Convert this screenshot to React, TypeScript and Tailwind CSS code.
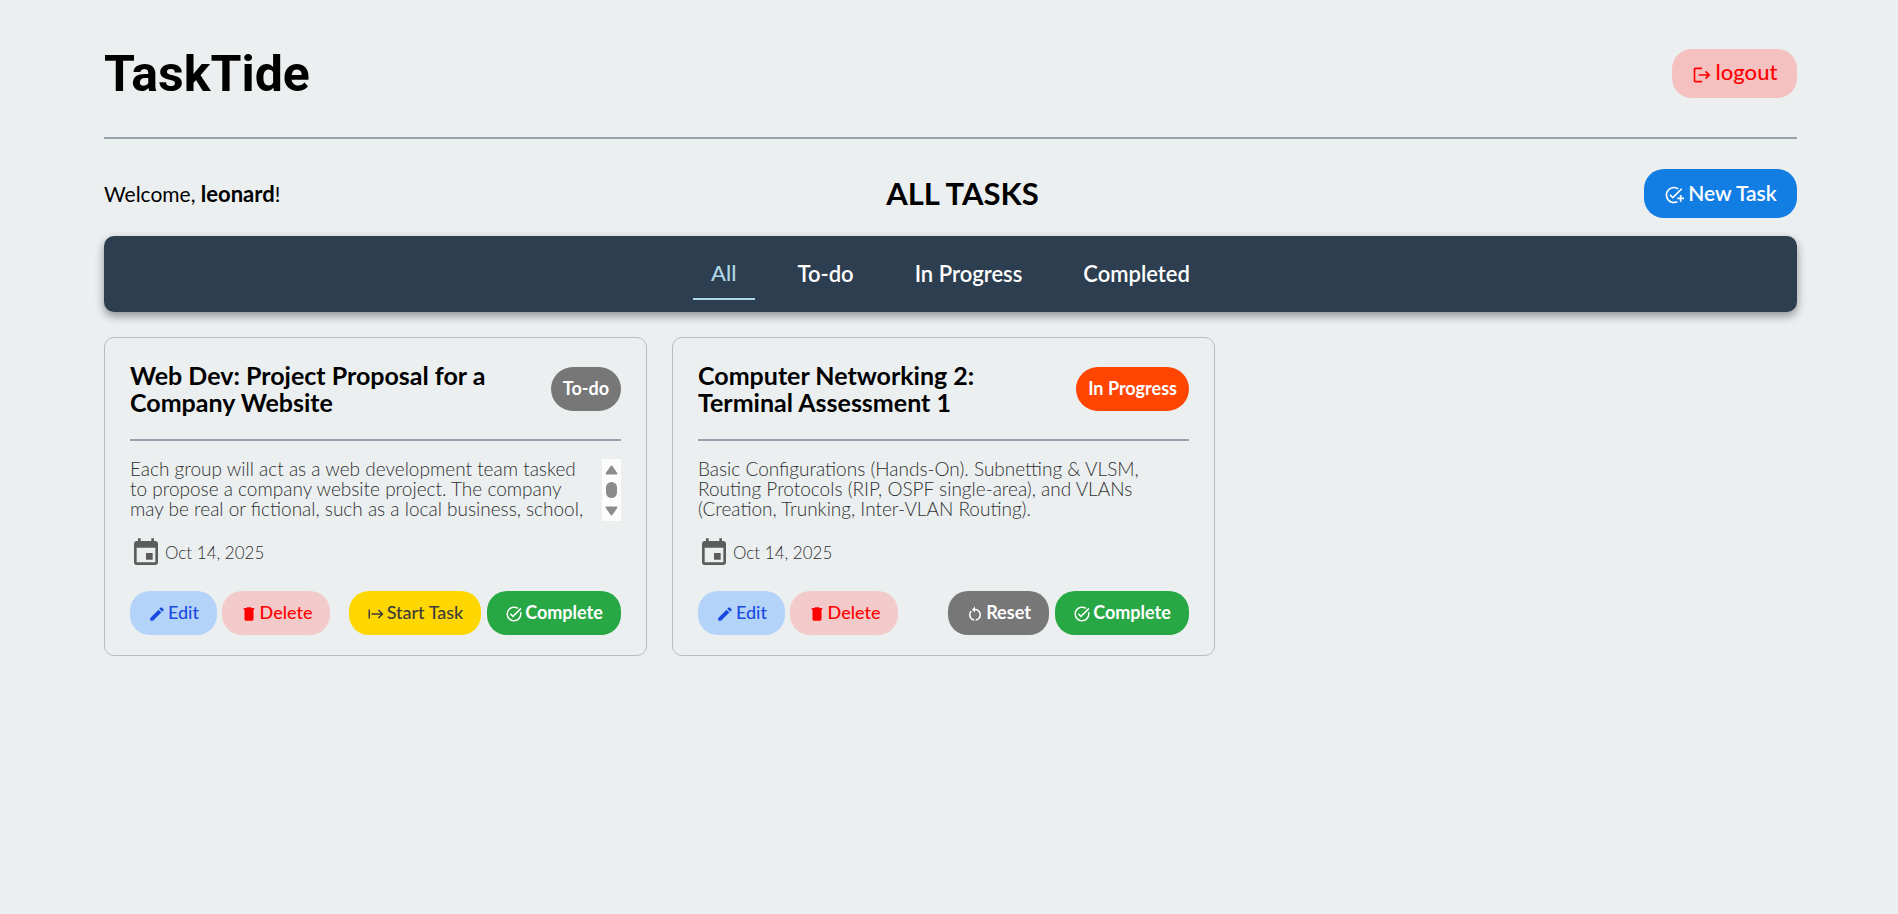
import { useState, type ReactNode } from "react";
import { MdAddTask, MdEdit, MdEvent, MdLogout, MdRestartAlt, MdStart, MdTaskAlt } from "react-icons/md";

type Status = "To-do" | "In Progress" | "Completed";

interface Task {
  title: string;
  status: Status;
  description: string;
  due: string;
  overflowing?: boolean;
}

const tasks: Task[] = [
  {
    title: "Web Dev: Project Proposal for a Company Website",
    status: "To-do",
    description:
      "Each group will act as a web development team tasked to propose a company website project. The company may be real or fictional, such as a local business, school,",
    due: "Oct 14, 2025",
    overflowing: true,
  },
  {
    title: "Computer Networking 2: Terminal Assessment 1",
    status: "In Progress",
    description:
      "Basic Configurations (Hands-On). Subnetting & VLSM, Routing Protocols (RIP, OSPF single-area), and VLANs (Creation, Trunking, Inter-VLAN Routing).",
    due: "Oct 14, 2025",
  },
];

const filters = ["All", "To-do", "In Progress", "Completed"];

const badgeColors: Record<Status, string> = {
  "To-do": "bg-[#777777]",
  "In Progress": "bg-[#ff4500]",
  Completed: "bg-[#28a745]",
};

function TrashIcon() {
  return (
    <svg viewBox="0 0 24 24" className="size-[18px]" fill="currentColor" aria-hidden="true">
      <path d="M8 21c-1.100 0-2-.9-2-2V6H5V4h3.500l1-1h5l1 1H19v2h-1v13c0 1.100-.9 2-2 2z" />
    </svg>
  );
}

function CardButton({ className, icon, children }: { className: string; icon: ReactNode; children: ReactNode }) {
  return (
    <button
      type="button"
      className={`flex h-11 items-center justify-center gap-0.5 whitespace-nowrap rounded-[20px] pb-0.5 text-[18px] ${className}`}
    >
      <span className="pt-1">{icon}</span>
      {children}
    </button>
  );
}

function ScrollTrack() {
  return (
    <svg viewBox="0 0 19 62" className="h-[62px] w-[19px] shrink-0" aria-hidden="true">
      <rect width="19" height="62" fill="#fcfcfc" />
      <path d="M8.500 7.200q1-1.400 2 0L15.200 14q.8 1.500-.8 1.500H4.600Q3 15.500 3.800 14z" fill="#8b8b8b" />
      <rect x="4" y="23" width="11" height="16" rx="5.500" fill="#8b8b8b" />
      <path d="M8.500 55.800q1 1.400 2 0L15.200 49q.8-1.500-.8-1.500H4.600Q3 47.500 3.800 49z" fill="#8b8b8b" />
    </svg>
  );
}

function TaskCard({ task }: { task: Task }) {
  return (
    <article className="rounded-[10px] border border-[#b9bdc0] px-[25px] pb-5 pt-6">
      <header className="flex items-center justify-between gap-4 border-b-2 border-[#98a2ac] pb-[23px]">
        <h3 className="max-w-[360px] text-[25px] font-bold leading-[27px]">{task.title}</h3>
        <span
          className={`flex h-11 shrink-0 items-center rounded-[22px] px-3 pb-0.5 text-[18px] font-bold text-white ${badgeColors[task.status]}`}
        >
          {task.status}
        </span>
      </header>
      <div className="mt-[18px] flex h-[62px] justify-between">
        <p className="max-w-[460px] text-[19px] font-light leading-5 text-[#303030]">{task.description}</p>
        {task.overflowing && <ScrollTrack />}
      </div>
      <div className="mt-4 flex items-center gap-[3px] text-[#303030]">
        <MdEvent className="size-8 text-[#5c5c5c]" aria-hidden="true" />
        <time className="text-[17px] font-light" dateTime="2025-10-14">
          {task.due}
        </time>
      </div>
      <div className="mt-[22px] flex items-center justify-between">
        <div className="flex gap-[5px]">
          <CardButton className="w-[87px] bg-[#b3d3f9] font-medium text-[#1a4be0]" icon={<MdEdit className="size-[18px]" />}>
            Edit
          </CardButton>
          <CardButton className="w-[108px] bg-[#f3caca] font-medium text-[#ff0000]" icon={<TrashIcon />}>
            Delete
          </CardButton>
        </div>
        <div className="flex gap-1.5">
          {task.status === "To-do" ? (
            <CardButton className="w-[132px] bg-[#ffd700] font-medium text-[#3c3c3c]" icon={<MdStart className="size-[18px]" />}>
              Start Task
            </CardButton>
          ) : (
            <CardButton className="w-[101px] bg-[#777777] font-bold text-white" icon={<MdRestartAlt className="size-[18px]" />}>
              Reset
            </CardButton>
          )}
          <CardButton className="w-[134px] bg-[#28a745] font-bold text-white" icon={<MdTaskAlt className="size-[18px]" />}>
            Complete
          </CardButton>
        </div>
      </div>
    </article>
  );
}

export default function App() {
  const [active, setActive] = useState("All");
  const shown = tasks.filter((task) => active === "All" || task.status === active);

  return (
    <div className="min-h-screen bg-[#ebeff0] pb-10 pl-[104px] pr-[101px] pt-[49px] font-['Lato',sans-serif] text-black">
      <header className="flex h-[90px] items-start justify-between border-b-2 border-[#98a2ac]">
        <h1 className="font-['Roboto',sans-serif] text-[50px] font-bold leading-[51px]">TaskTide</h1>
        <button
          type="button"
          className="flex h-[49px] w-[125px] items-center justify-center gap-1 rounded-[20px] bg-[#f5c0c0] pb-1 text-[22px] font-medium text-[#ff0000]"
        >
          <MdLogout className="mt-1.5 size-5" aria-hidden="true" />
          logout
        </button>
      </header>

      <main>
        <div className="mt-[30px] grid grid-cols-[1fr_auto_1fr] items-center">
          <p className="text-[21px]">
            Welcome, <strong className="text-[22px] font-bold">leonard</strong>!
          </p>
          <h2 className="ml-6 text-[31px] font-bold leading-[49px]">ALL TASKS</h2>
          <button
            type="button"
            className="flex h-[49px] w-[153px] items-center justify-center gap-1 justify-self-end rounded-[20px] bg-[#127ee3] pb-0.5 text-[21px] font-semibold text-white"
          >
            <MdAddTask className="mt-1 size-5" aria-hidden="true" />
            New Task
          </button>
        </div>

        <nav className="mt-[18px] flex h-[76px] items-center justify-center gap-[25px] rounded-[10px] bg-[#2d3e50] text-[22px] shadow-[0_4px_10px_rgba(0,0,0,0.4)]">
          {filters.map((name) => (
            <button
              key={name}
              type="button"
              onClick={() => setActive(name)}
              className={
                name === active
                  ? "h-[52px] border-b-2 border-[#add8e6] px-[18px] pb-0.5 font-medium text-[#add8e6]"
                  : "h-[52px] px-[18px] pb-0.5 font-semibold text-white"
              }
            >
              {name}
            </button>
          ))}
        </nav>

        <section className="mt-[25px] grid grid-cols-3 gap-[25px] pr-3.5" aria-label="Tasks">
          {shown.map((task) => (
            <TaskCard key={task.title} task={task} />
          ))}
        </section>
      </main>
    </div>
  );
}
